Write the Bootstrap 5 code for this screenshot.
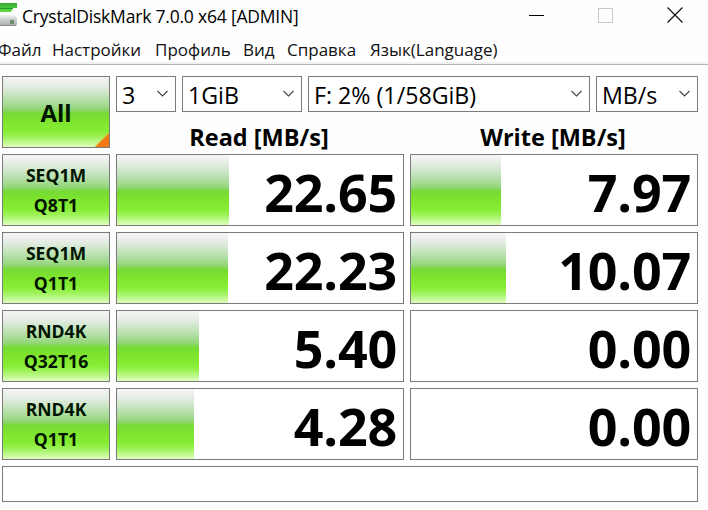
<!DOCTYPE html>
<html lang="ru">
<head>
  <meta charset="UTF-8">
  <meta name="viewport" content="width=device-width, initial-scale=1">
  <title>CrystalDiskMark 7.0.0 x64 [ADMIN]</title>
  <link href="https://cdn.jsdelivr.net/npm/bootstrap@5.3.3/dist/css/bootstrap.min.css" rel="stylesheet">
  <style>
    body { width: 708px; height: 510px; font-family: "Open Sans", "Noto Sans", sans-serif; color: #000; background: #fefefe; line-height: 1; }
    .title-bar { height: 32px; }
    .title-text { font-size: 17.5px; letter-spacing: -.2px; margin: 2px 0 0 5px; }
    .win-controls { gap: 54px; margin: 0 25px 2px auto; }
    .menu-strip { height: 33px; border-bottom: 1px solid #b4b4b4; box-shadow: inset 0 -2px #f1f1f1; font-size: 17px; padding-top: 9px; }
    .menu-strip a { color: #111; text-decoration: none; white-space: nowrap; flex: none; }
    .bench { padding: 11px 10px 0 2px; gap: 6px; }
    .bench-row { gap: 6px; }
    .box { border: 1px solid #7b7b7b; background: #fff; }
    .green, .meter-fill { background: linear-gradient(#f7f5f7 0%, #e0ebdf 15%, #b5dfa9 33%, #93d678 46%, #76da35 52%, #7de32f 62%, #87ed32 77%, #9bf255 85%, #c9fa9c 95%, #dffbc0 100%); }
    .test-btn { width: 108px; height: 72px; flex: none; padding: 0; color: #001400; font-weight: 700; font-size: 17.6px; line-height: 30px; border-radius: 0; }
    .all-btn { font-size: 24px; padding-top: 2px; position: relative; }
    .all-btn svg { position: absolute; right: 0; bottom: 0; }
    .pick { height: 36px; font-size: 23.2px; padding: 4px 6px 0 5px; white-space: nowrap; }
    .head-label { width: 288px; height: 36px; font-size: 23.5px; font-weight: 700; padding: 14px 2px 0 0; text-align: center; }
    .meter { width: 288px; height: 72px; }
    .meter-num { font-size: 52px; font-weight: 700; letter-spacing: -.2px; line-height: 70px; padding: 2px 6px 0 0; height: 70px; }
    .status-line { height: 36px; }
  </style>
</head>
<body class="overflow-hidden">
  <!-- Title bar -->
  <header class="title-bar d-flex align-items-center">
    <svg width="17" height="26" viewBox="0 0 17 26">
      <defs>
        <linearGradient id="lid" x1="0" y1="0" x2="0" y2="1"><stop offset="0" stop-color="#35a834"/><stop offset="1" stop-color="#5fe04a"/></linearGradient>
        <linearGradient id="disk" x1="0" y1="0" x2="0" y2="1"><stop offset="0" stop-color="#f2f3f3"/><stop offset=".4" stop-color="#cdd0d0"/><stop offset="1" stop-color="#a9adad"/></linearGradient>
      </defs>
      <path d="M0 0H17V5H13L11 9H0Z" fill="url(#lid)"/>
      <path d="M0 5.5H13" stroke="#279b26"/>
      <path d="M0 12H14L17 15V21Q17 23 15 23H0Z" fill="url(#disk)"/>
      <path d="M0 22.5H16" stroke="#858989" fill="none"/>
      <rect x="10" y="17" width="4" height="4" fill="#708b70"/>
    </svg>
    <div class="title-text text-nowrap">CrystalDiskMark 7.0.0 x64 [ADMIN]</div>
    <div class="win-controls d-flex align-items-center">
      <svg width="15" height="15"><path d="M0 7.5H15" stroke="#000"/></svg>
      <svg width="15" height="15"><rect x=".5" y=".5" width="14" height="14" fill="none" stroke="#c9c9c9"/></svg>
      <svg width="16" height="16"><path d="M.5 .5L15.5 15.5M15.5 .5L.5 15.5" stroke="#111" stroke-width="1.2"/></svg>
    </div>
  </header>

  <!-- Menu -->
  <nav class="menu-strip d-flex">
    <a href="#" style="width:54px;margin-left:-2px">Файл</a>
    <a href="#" style="width:103px">Настройки</a>
    <a href="#" style="width:88px">Профиль</a>
    <a href="#" style="width:44px">Вид</a>
    <a href="#" style="width:83px">Справка</a>
    <a href="#">Язык(Language)</a>
  </nav>

  <main class="bench d-flex flex-column">
    <div class="bench-row d-flex">
      <button class="test-btn all-btn box green">All
        <svg width="14" height="14"><path d="M14 0V14H0Z" fill="#f47a16"/><path d="M0 13.5L14 -.5" stroke="#d6c53c"/></svg>
      </button>
      <div>
        <div class="bench-row d-flex" id="picks"></div>
        <div class="bench-row d-flex">
          <div class="head-label">Read [MB/s]</div>
          <div class="head-label">Write [MB/s]</div>
        </div>
      </div>
    </div>
    <div class="bench d-flex flex-column p-0" id="tests"></div>
    <div class="status-line box"></div>
  </main>

  <script src="https://cdn.jsdelivr.net/npm/bootstrap@5.3.3/dist/js/bootstrap.bundle.min.js"></script>
  <script>
    const picks = [
      { text: '3', width: 60 },
      { text: '1GiB', width: 120 },
      { text: 'F: 2% (1/58GiB)', width: 282 },
      { text: 'MB/s', width: 102 }
    ];

    // fill = width of the green bar in px
    const tests = [
      { name: ['SEQ1M', 'Q8T1'], read: ['22.65', 112], write: ['7.97', 90] },
      { name: ['SEQ1M', 'Q1T1'], read: ['22.23', 111], write: ['10.07', 95] },
      { name: ['RND4K', 'Q32T16'], read: ['5.40', 82], write: ['0.00', 0] },
      { name: ['RND4K', 'Q1T1'], read: ['4.28', 77], write: ['0.00', 0] }
    ];

    document.getElementById('picks').innerHTML = picks.map(p => `
      <div class="pick box d-flex align-items-center justify-content-between" style="width:${p.width}px">
        <span>${p.text}</span>
        <svg width="13" height="10" style="margin-top:-5px"><path d="M1.5 2L6.5 7L11.5 2" fill="none" stroke="#444" stroke-width="1.1"/></svg>
      </div>`).join('');

    const meter = ([value, fill]) => `
      <div class="meter box d-flex justify-content-between">
        <div class="meter-fill" style="width:${fill}px"></div>
        <div class="meter-num">${value}</div>
      </div>`;

    document.getElementById('tests').innerHTML = tests.map(t => `
      <div class="bench-row d-flex">
        <button class="test-btn box green">${t.name.join('<br>')}</button>
        ${meter(t.read)}${meter(t.write)}
      </div>`).join('');
  </script>
</body>
</html>
